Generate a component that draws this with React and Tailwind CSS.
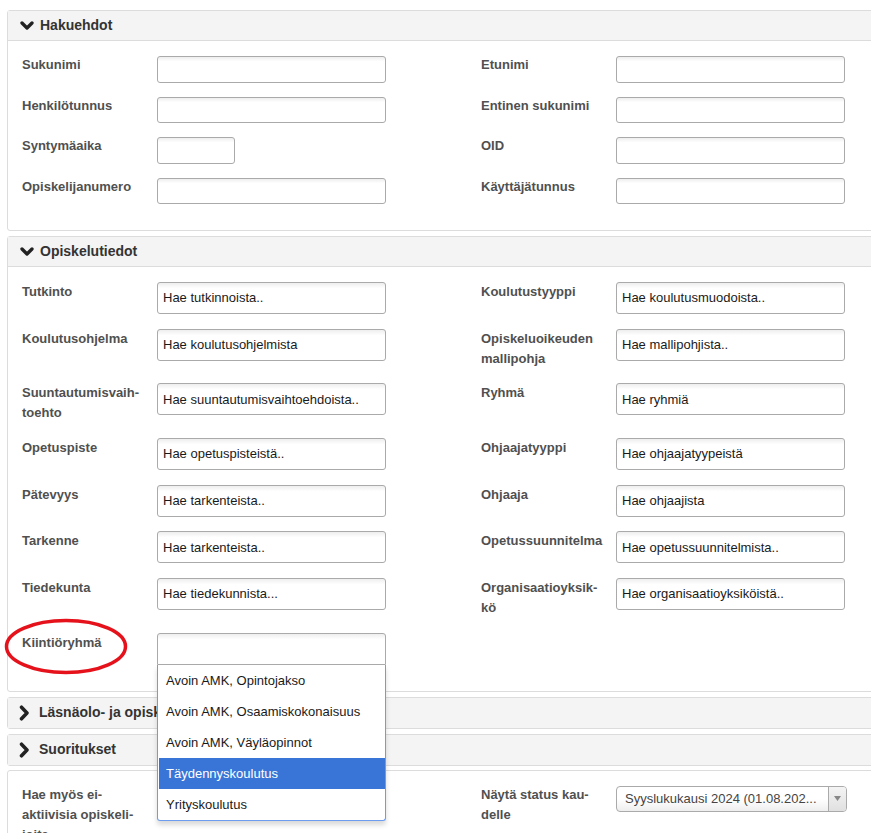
import React from "react";

function ChevronDown() {
    return (
        <svg width="14" height="10" viewBox="0 0 14 10" className="shrink-0">
            <path d="M2 2 L7 7 L12 2" fill="none" stroke="#222" strokeWidth="3.3" strokeLinecap="round" strokeLinejoin="round" />
        </svg>
    );
}

function ChevronRight() {
    return (
        <svg width="11" height="16" viewBox="0 0 11 16" className="shrink-0">
            <path d="M2.5 2.2 L8 8 L2.5 13.8" fill="none" stroke="#222" strokeWidth="3.5" strokeLinecap="round" strokeLinejoin="round" />
        </svg>
    );
}

function PanelHeader({ title, open }) {
    return (
        <div className={"flex h-[30px] items-center bg-[#f4f4f4] text-[14px] font-bold text-[#333] " + (open ? "gap-[6px] border-b border-[#dcdcdc] pl-[12px]" : "gap-[9px] pl-[11px]")}>
            {open ? <ChevronDown /> : <ChevronRight />}
            <span>{title}</span>
        </div>
    );
}

// select2-tyylinen tekstikenttä
function Field({ label, placeholder = "", small = false, tall = false }) {
    return (
        <div className="flex items-start">
            <div className={"w-[135px] shrink-0 whitespace-nowrap text-[13px] font-bold leading-[20px] text-[#505050] " + (tall ? "" : "-mt-[1px]")}>
                {label}
            </div>
            <div
                className={
                    "flex items-center rounded-[3px] border border-[#aaa] bg-[linear-gradient(to_bottom,#eee_0%,#fff_18%)] pl-[5px] text-[13px] text-[#1a1a1a] " +
                    (small ? "w-[78px] " : "w-[229px] ") +
                    (tall ? "h-[32px]" : "h-[26.5px]")
                }
            >
                {placeholder}
            </div>
        </div>
    );
}

const options = [
    "Avoin AMK, Opintojakso",
    "Avoin AMK, Osaamiskokonaisuus",
    "Avoin AMK, Väyläopinnot",
    "Täydennyskoulutus",
    "Yrityskoulutus",
];

function QuotaField() {
    return (
        <div className="flex items-start">
            <div className="w-[135px] shrink-0 text-[13px] font-bold leading-[20px] text-[#505050]">Kiintiöryhmä</div>
            <div className="relative">
                <div className="h-[32px] w-[229px] rounded-t-[3px] border border-[#aaa] bg-[linear-gradient(to_bottom,#eee_0%,#fff_18%)]" />
                <div className="absolute left-0 top-full z-10 w-[229px] rounded-b-[3px] border-x border-b border-[#6b9cf0] bg-white pl-[1px] shadow-[0_4px_5px_rgba(0,0,0,0.15)]">
                    {options.map((o) => (
                        <div
                            key={o}
                            className={
                                "flex h-[31px] items-center pl-[7px] text-[13px] " +
                                (o === "Täydennyskoulutus" ? "bg-[#3875d7] text-white" : "text-[#1a1a1a]")
                            }
                        >
                            {o}
                        </div>
                    ))}
                </div>
            </div>
        </div>
    );
}

export default function App() {
    return (
        <div className="relative h-[833px] w-full overflow-hidden bg-white font-['Liberation_Sans',Arial,sans-serif]">
            <div className="w-[900px] pl-[7px] pt-[10px]">
                {/* Hakuehdot */}
                <div className="rounded-[3px] border border-[#dcdcdc]">
                    <PanelHeader title="Hakuehdot" open />
                    <div className="grid grid-cols-[459px_459px] gap-y-[14px] pb-[26px] pl-[14px] pt-[15px]">
                        <Field label="Sukunimi" />
                        <Field label="Etunimi" />
                        <Field label="Henkilötunnus" />
                        <Field label="Entinen sukunimi" />
                        <Field label="Syntymäaika" small />
                        <Field label="OID" />
                        <Field label="Opiskelijanumero" />
                        <Field label="Käyttäjätunnus" />
                    </div>
                </div>

                {/* Opiskelutiedot */}
                <div className="mt-[5px] rounded-[3px] border border-[#dcdcdc]">
                    <PanelHeader title="Opiskelutiedot" open />
                    <div className="grid grid-cols-[459px_459px] gap-y-[14.7px] pb-[26px] pl-[14px] pt-[15px]">
                        <Field tall label="Tutkinto" placeholder="Hae tutkinnoista.." />
                        <Field tall label="Koulutustyyppi" placeholder="Hae koulutusmuodoista.." />
                        <Field tall label="Koulutusohjelma" placeholder="Hae koulutusohjelmista" />
                        <Field tall label={<>Opiskeluoikeuden<br />mallipohja</>} placeholder="Hae mallipohjista.." />
                        <Field tall label={<>Suuntautumisvaih-<br />toehto</>} placeholder="Hae suuntautumisvaihtoehdoista.." />
                        <Field tall label="Ryhmä" placeholder="Hae ryhmiä" />
                        <Field tall label="Opetuspiste" placeholder="Hae opetuspisteistä.." />
                        <Field tall label="Ohjaajatyyppi" placeholder="Hae ohjaajatyypeistä" />
                        <Field tall label="Pätevyys" placeholder="Hae tarkenteista.." />
                        <Field tall label="Ohjaaja" placeholder="Hae ohjaajista" />
                        <Field tall label="Tarkenne" placeholder="Hae tarkenteista.." />
                        <Field tall label="Opetussuunnitelma" placeholder="Hae opetussuunnitelmista.." />
                        <Field tall label="Tiedekunta" placeholder="Hae tiedekunnista..." />
                        <Field tall label={<>Organisaatioyksik-<br />kö</>} placeholder="Hae organisaatioyksiköistä.." />
                        <QuotaField />
                        <div />
                    </div>
                </div>

                {/* Suljetut paneelit */}
                <div className="mt-[5px] rounded-[3px] border border-[#dcdcdc]">
                    <PanelHeader title="Läsnäolo- ja opiskeluoikeustiedot" />
                </div>
                <div className="mt-[5px] rounded-[3px] border border-[#dcdcdc]">
                    <PanelHeader title="Suoritukset" />
                </div>

                <div className="mt-[4px] rounded-[3px] border border-[#dcdcdc]">
                    <div className="grid grid-cols-[459px_459px] pb-[12px] pl-[14px] pt-[14px]">
                        <div className="w-[135px] text-[13px] font-bold leading-[20px] text-[#505050]">
                            Hae myös ei-<br />aktiivisia opiskeli-<br />joita
                        </div>
                        <div className="flex items-start">
                            <div className="w-[135px] shrink-0 text-[13px] font-bold leading-[20px] text-[#505050]">
                                Näytä status kau-<br />delle
                            </div>
                            <div className="mt-[1px] flex h-[26px] w-[231px] overflow-hidden rounded-[4px] border border-[#aaa] bg-[linear-gradient(to_bottom,#fff_50%,#eee_100%)]">
                                <div className="flex flex-1 items-center pl-[8px] text-[13px] text-[#444]">Syyslukukausi 2024 (01.08.202...</div>
                                <div className="flex w-[18px] items-center justify-center border-l border-[#aaa] bg-[linear-gradient(to_bottom,#f4f4f4,#e0e0e0)]">
                                    <svg width="7" height="5" viewBox="0 0 7 5"><path d="M0 0 L7 0 L3.5 5 Z" fill="#888" /></svg>
                                </div>
                            </div>
                        </div>
                    </div>
                </div>
            </div>

            {/* punainen merkintä */}
            <svg className="pointer-events-none absolute left-[4px] top-[618px]" width="124" height="57" viewBox="0 0 124 57">
                <ellipse cx="62" cy="28.5" rx="59.5" ry="26" fill="none" stroke="#e5121b" strokeWidth="3.5" />
            </svg>
        </div>
    );
}
